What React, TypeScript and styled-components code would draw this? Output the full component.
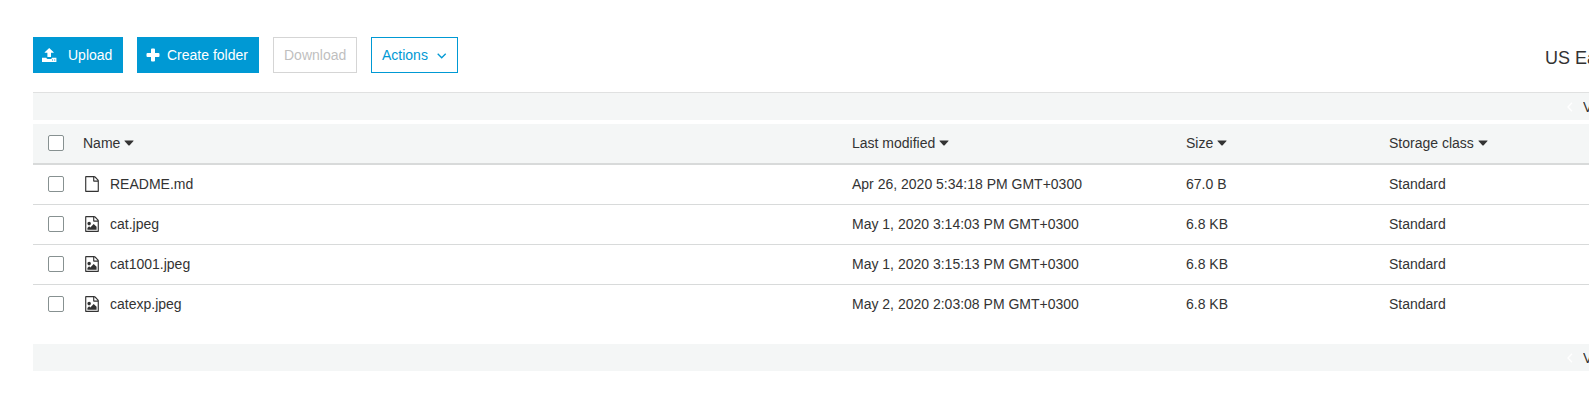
import React from "react";
import styled, { createGlobalStyle, css } from "styled-components";

const GlobalStyle = createGlobalStyle`
  * { box-sizing: border-box; }
  html, body { margin: 0; background: #fff; overflow: hidden; }
  body { font-family: "Liberation Sans", Arial, sans-serif; font-size: 14px; color: #333; }
`;

const Page = styled.main`
  width: 1589px;
  height: 417px;
  overflow: hidden;
  padding: 37px 0 0 33px;
`;

const Toolbar = styled.header`
  display: flex;
  align-items: flex-start;
  gap: 14px;
  height: 55px;
`;

const Button = styled.button<{ $kind: "primary" | "disabled" | "outline"; $width: number }>`
  display: flex;
  align-items: center;
  width: ${(p) => p.$width}px;
  height: 36px;
  padding: 0 0 0 8px;
  border: 1px solid #0099d4;
  font: inherit;
  line-height: 20px;
  white-space: nowrap;
  ${(p) => p.$kind === "primary" && css`background: #0099d4; color: #fff;`}
  ${(p) => p.$kind === "disabled" && css`background: #fff; color: #bfbfbf; border-color: #d5d5d5; padding-left: 10px;`}
  ${(p) => p.$kind === "outline" && css`background: #fff; color: #0099d4; padding-left: 10px;`}
`;

const ButtonIcon = styled.svg<{ $gap: number }>`
  flex: none;
  margin-right: ${(p) => p.$gap}px;
`;

const MenuArrow = styled.svg`
  flex: none;
  margin: 1px 0 0 9px;
`;

const Region = styled.div`
  margin: 9px 0 0 auto;
  width: 44px;
  overflow: hidden;
  font-size: 18px;
  line-height: 24px;
  white-space: nowrap;
`;

const Pager = styled.div<{ $top?: boolean }>`
  display: flex;
  align-items: center;
  justify-content: flex-end;
  height: ${(p) => (p.$top ? 28 : 27)}px;
  border-top: ${(p) => (p.$top ? "1px solid #e0e1e1" : "none")};
  background: #f4f6f6;
`;

const PagerText = styled.span`
  width: 6px;
  margin-left: 10px;
  overflow: hidden;
  white-space: nowrap;
  line-height: 20px;
`;

const Table = styled.section`
  margin: 4px 0 20px;
`;

const Row = styled.div<{ $head?: boolean }>`
  display: grid;
  grid-template-columns: 50px 769px 334px 203px 200px;
  align-items: center;
  height: ${(p) => (p.$head ? 41 : 40)}px;
  padding-bottom: 1px;
  background: ${(p) => (p.$head ? "#f4f6f6" : "#fff")};
  border-bottom: ${(p) => (p.$head ? "2px solid #d8dada" : "1px solid #d8dada")};
  white-space: nowrap;
  line-height: 20px;
  &:last-child { height: 39px; border-bottom: none; }
`;

const Checkbox = styled.input.attrs({ type: "checkbox" })`
  appearance: none;
  width: 16px;
  height: 16px;
  margin: 0 0 0 15px;
  border: 1px solid #879191;
  border-radius: 2px;
  background: #fff;
`;

const HeadCell = styled.div`
  display: flex;
  align-items: center;
  gap: 4px;
`;

const NameCell = styled.div`
  display: flex;
  align-items: center;
  gap: 10px;
  padding-left: 1px;
`;

const outline =
  "M1596 380q28 28 48 76t20 88v1152q0 40-28 68t-68 28h-1344q-40 0-68-28t-28-68v-1600q0-40 28-68t68-28h896q40 0 88 20t76 48zm-444-244v376h376q-10-29-22-41l-313-313q-12-12-41-22zm384 1528v-1024h-416q-40 0-68-28t-28-68v-416h-768v1536h1280z";
const picture =
  "m-128-448v320h-1024v-192l192-192 128 128 384-384zm-832-192q-80 0-136-56t-56-136 56-136 136-56 136 56 56 136-56 136-136 56z";

const FileIcon = ({ image }: { image: boolean }) => (
  <svg width="16" height="16" viewBox="0 0 1792 1792" fill="#333">
    <path d={image ? outline + picture : outline} />
  </svg>
);

const Caret = () => (
  <svg width="10" height="6" viewBox="0 0 10 6" fill="#333">
    <path d="M.8.5h8.4q.7 0 .3.6L5.7 5.2q-.7.7-1.4 0L.5 1.1Q.1.5.8.5z" />
  </svg>
);

const PrevArrow = () => (
  <svg width="6" height="10" viewBox="0 0 6 10" fill="none" stroke="#fff" strokeWidth="1.3">
    <path d="M5 .8 1 5l4 4.2" />
  </svg>
);

const PagerBar = ({ top }: { top?: boolean }) => (
  <Pager $top={top}>
    <PrevArrow />
    <PagerText>Viewing</PagerText>
  </Pager>
);

const columns = ["Name", "Last modified", "Size", "Storage class"];
const files = [
  { name: "README.md", modified: "Apr 26, 2020 5:34:18 PM GMT+0300", size: "67.0 B" },
  { name: "cat.jpeg", modified: "May 1, 2020 3:14:03 PM GMT+0300", size: "6.8 KB" },
  { name: "cat1001.jpeg", modified: "May 1, 2020 3:15:13 PM GMT+0300", size: "6.8 KB" },
  { name: "catexp.jpeg", modified: "May 2, 2020 2:03:08 PM GMT+0300", size: "6.8 KB" },
];

export default function App() {
  return (
    <Page>
      <GlobalStyle />
      <Toolbar>
        <Button $kind="primary" $width={90}>
          <ButtonIcon $gap={11} width="15" height="14" viewBox="0 0 15 14" fill="currentColor">
            <path d="M7.200 0 11.700 4.200v.6H9V9H5.400V4.800H2.700v-.6z" />
            <path fillRule="evenodd" d="M0 9.700h4.300c.3.8.9 1.200 1.500 1.200h2.800c.7 0 1.200-.4 1.500-1.200h4.300V14H0zM10 11.500v1h1v-1zM12.200 11.500v1h1v-1z" />
          </ButtonIcon>
          Upload
        </Button>
        <Button $kind="primary" $width={122}>
          <ButtonIcon $gap={7} width="14" height="14" viewBox="0 0 14 14" fill="currentColor">
            <path d="M6 .5h2q1 0 1 1V5h3.500q1 0 1 1v2q0 1-1 1H9v3.500q0 1-1 1H6q-1 0-1-1V9H1.500q-1 0-1-1V6q0-1 1-1H5V1.500q0-1 1-1z" />
          </ButtonIcon>
          Create folder
        </Button>
        <Button $kind="disabled" $width={84} disabled>Download</Button>
        <Button $kind="outline" $width={87}>
          Actions
          <MenuArrow width="10" height="6" viewBox="0 0 10 6" fill="none" stroke="currentColor" strokeWidth="1.3">
            <path d="M.7.8 4.700 4.800l4-4" />
          </MenuArrow>
        </Button>
        <Region>US East</Region>
      </Toolbar>
      <PagerBar top />
      <Table>
        <Row $head>
          <Checkbox />
          {columns.map((c) => (
            <HeadCell key={c}>{c}<Caret /></HeadCell>
          ))}
        </Row>
        {files.map((f) => (
          <Row key={f.name}>
            <Checkbox />
            <NameCell><FileIcon image={f.name.endsWith(".jpeg")} />{f.name}</NameCell>
            <div>{f.modified}</div>
            <div>{f.size}</div>
            <div>Standard</div>
          </Row>
        ))}
      </Table>
      <PagerBar />
    </Page>
  );
}
